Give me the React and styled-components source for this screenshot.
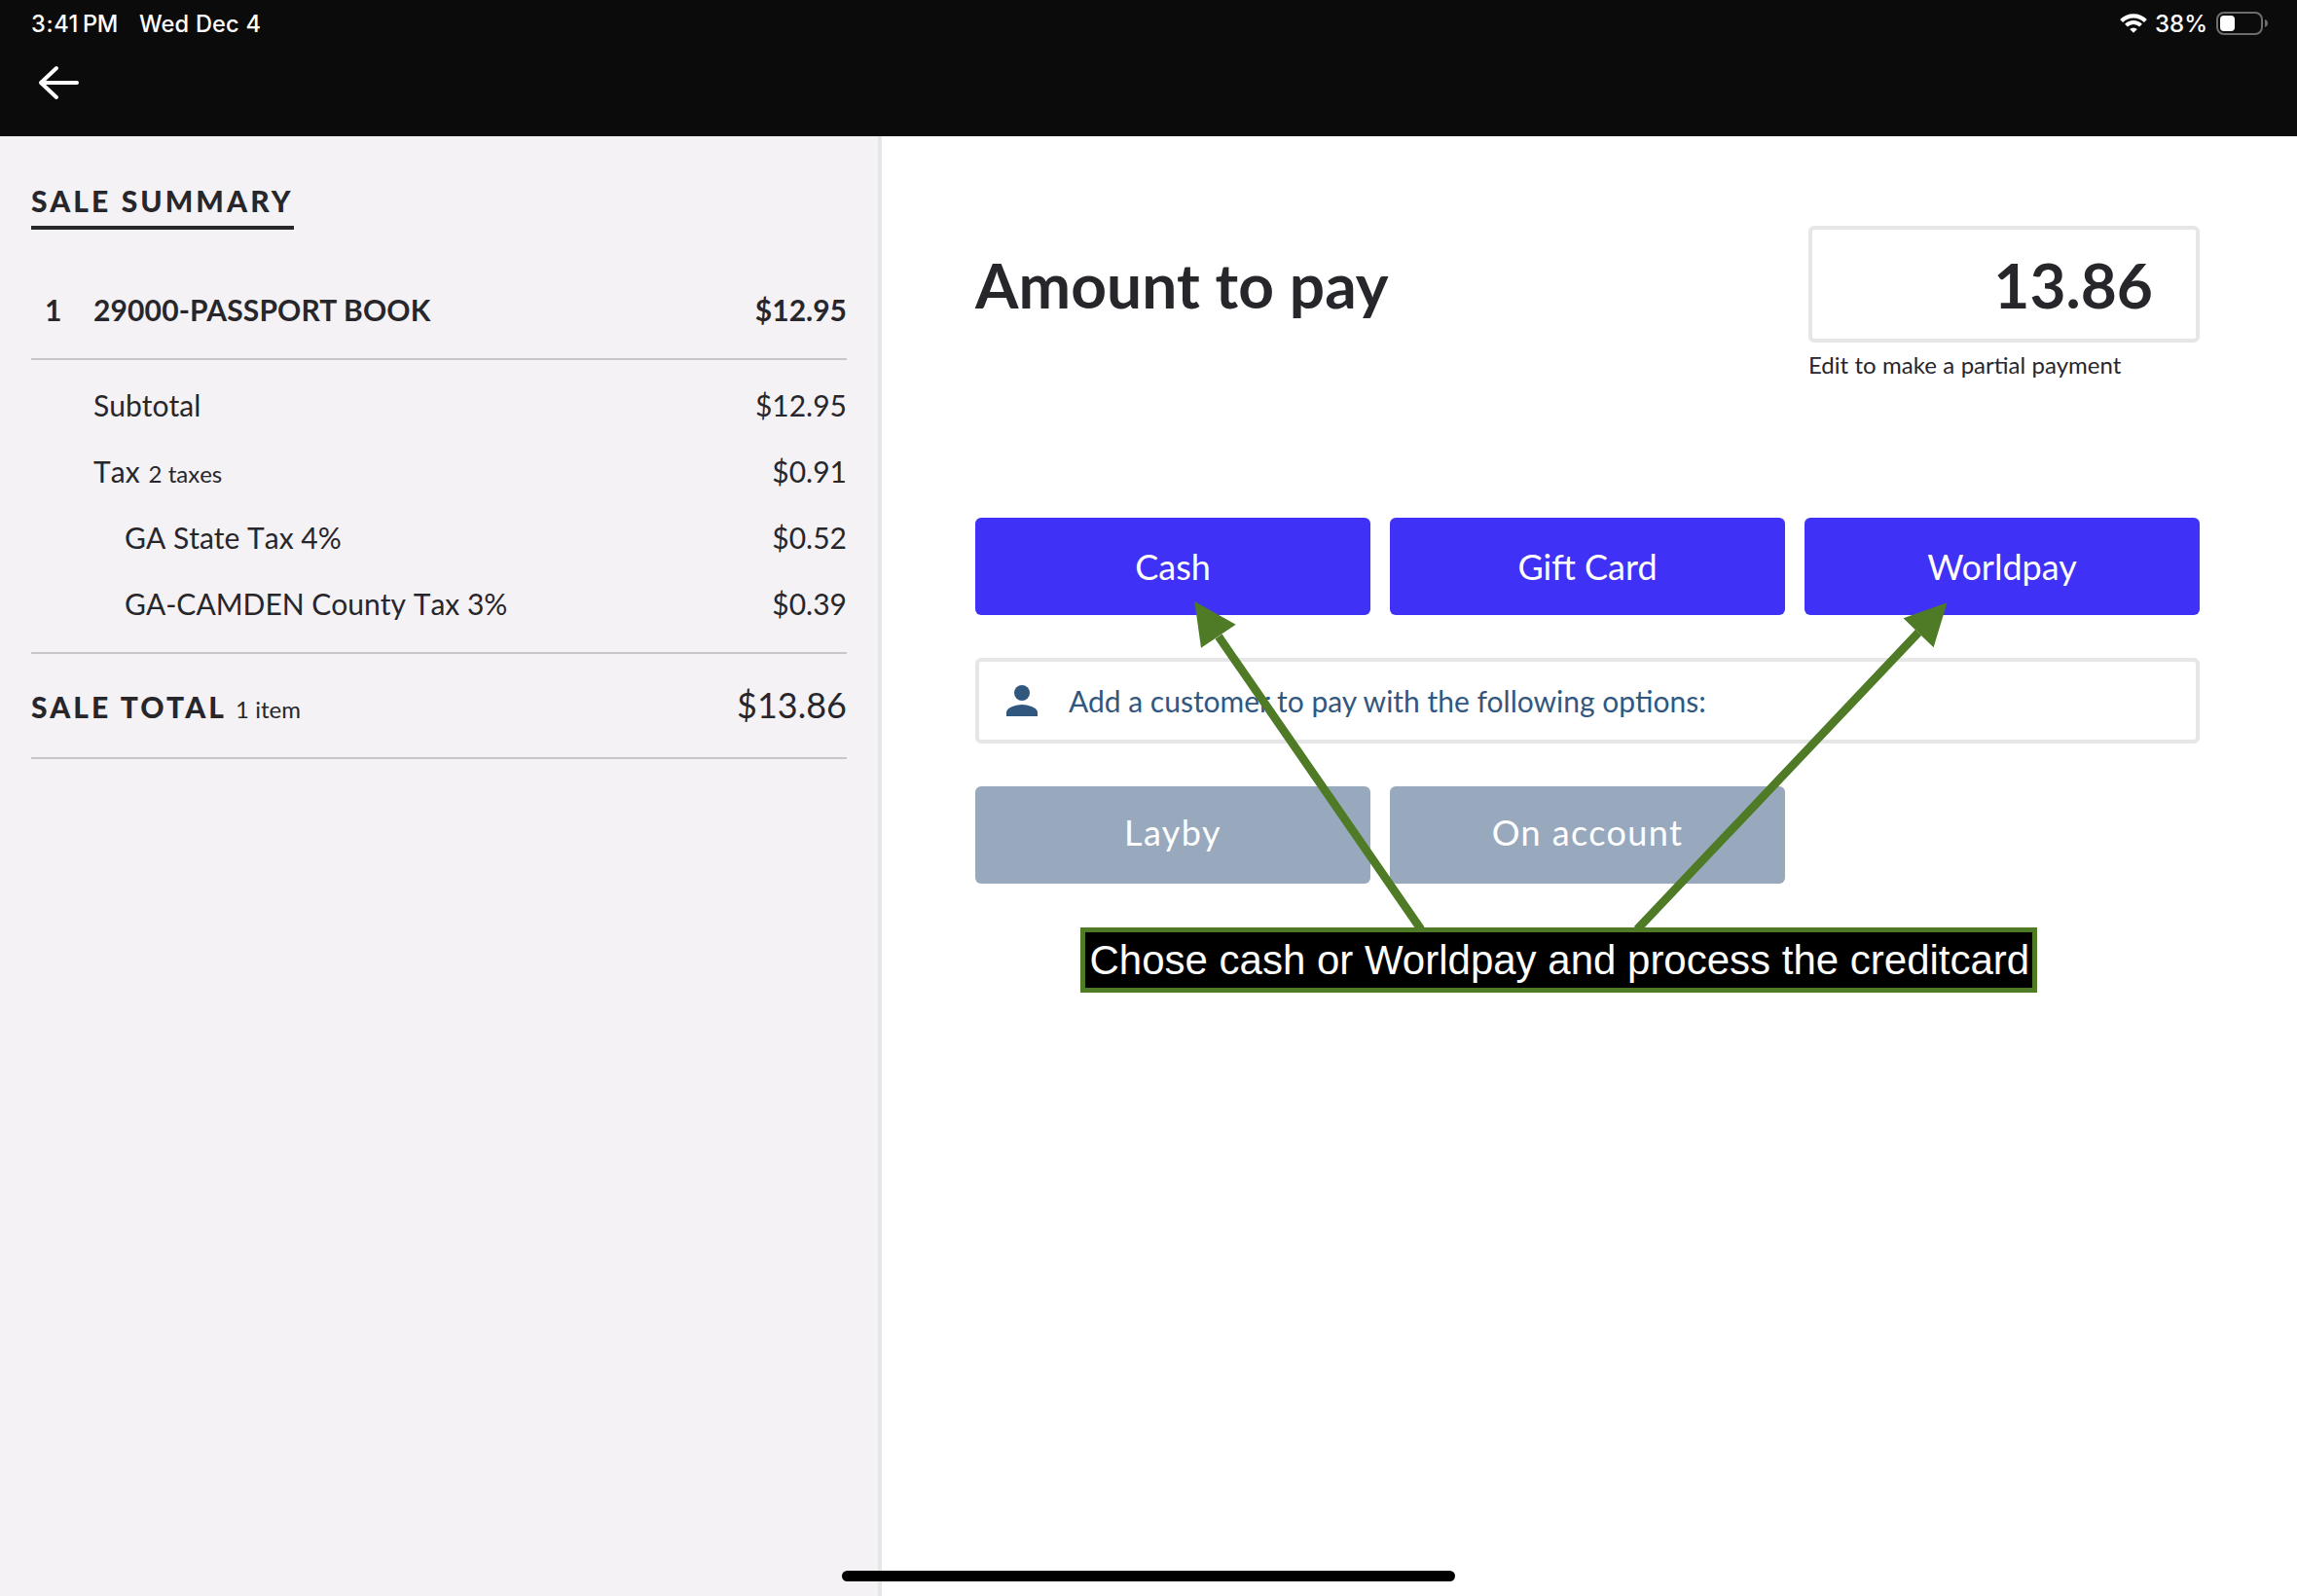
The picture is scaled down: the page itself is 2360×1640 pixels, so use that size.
import styled, { createGlobalStyle } from 'styled-components'

const charges = [
  { label: 'Subtotal', amount: '$12.95' },
  { label: 'Tax', note: '2 taxes', amount: '$0.91' },
  { label: 'GA State Tax 4%', amount: '$0.52', nested: true },
  { label: 'GA-CAMDEN County Tax 3%', amount: '$0.39', nested: true },
]

const payments = ['Cash', 'Gift Card', 'Worldpay']
const customerPayments = ['Layby', 'On account']

const WifiIcon = () => (
  <svg width="28" height="20" viewBox="0 0 28 20" fill="none" stroke="#fff">
    <path d="M1.6 7.4A17.6 17.6 0 0 1 26.4 7.4" strokeWidth="4.2" />
    <path d="M6.5 12.1A10.6 10.6 0 0 1 21.5 12.1" strokeWidth="4" />
    <path d="M14 19.8L10.2 16A5.4 5.4 0 0 1 17.8 16Z" fill="#fff" stroke="none" />
  </svg>
)

const BatteryIcon = () => (
  <svg width="54" height="24" viewBox="0 0 54 24">
    <rect x="1" y="1" width="46" height="22" rx="7" fill="none" stroke="#6d6d6d" strokeWidth="2" />
    <rect x="4" y="4" width="15" height="16" rx="4" fill="#fff" />
    <path d="M50 8C52 8.6 53 10.2 53 12S52 15.4 50 16Z" fill="#6d6d6d" />
  </svg>
)

const BackIcon = () => (
  <svg
    width="48"
    height="48"
    viewBox="0 0 48 48"
    fill="none"
    stroke="#fff"
    strokeWidth="4"
    strokeLinecap="round"
    strokeLinejoin="round"
  >
    <path d="M43 24H6M22 9L6 24L22 39" />
  </svg>
)

const PersonIcon = () => (
  <svg width="48" height="48" viewBox="0 0 24 24" fill="#32577f">
    <circle cx="12" cy="8" r="4" />
    <path d="M4 20v-2c0-2.66 5.33-4 8-4s8 1.34 8 4v2z" />
  </svg>
)

const App = () => {
  return (
    <Screen>
      <GlobalStyle />
      <Header>
        <StatusBar>
          <Clock>
            <Time>3:41</Time>
            <Meridiem>PM</Meridiem>
            <Day>Wed Dec 4</Day>
          </Clock>
          <Indicators>
            <WifiIcon />
            <Battery>38%</Battery>
            <BatteryIcon />
          </Indicators>
        </StatusBar>
        <BackButton aria-label="Back">
          <BackIcon />
        </BackButton>
      </Header>

      <Body>
        <Summary>
          <SummaryTitle>SALE SUMMARY</SummaryTitle>
          <ItemRow>
            <Quantity>1</Quantity>
            <ItemName>29000-PASSPORT BOOK</ItemName>
            <span>$12.95</span>
          </ItemRow>
          <Charges>
            {charges.map(({ label, note, amount, nested }) => (
              <ChargeRow key={label} $nested={nested}>
                <ChargeLabel>
                  {label}
                  {note && <Note>{note}</Note>}
                </ChargeLabel>
                <span>{amount}</span>
              </ChargeRow>
            ))}
          </Charges>
          <TotalRow>
            <TotalLabel>
              SALE TOTAL<Note>1 item</Note>
            </TotalLabel>
            <Total>$13.86</Total>
          </TotalRow>
        </Summary>

        <Payment>
          <AmountRow>
            <AmountTitle>Amount to pay</AmountTitle>
            <div>
              <AmountField>13.86</AmountField>
              <Hint>Edit to make a partial payment</Hint>
            </div>
          </AmountRow>
          <ButtonGrid>
            {payments.map(name => (
              <PayButton key={name}>{name}</PayButton>
            ))}
          </ButtonGrid>
          <CustomerPrompt>
            <PersonIcon />
            Add a customer to pay with the following options:
          </CustomerPrompt>
          <ButtonGrid>
            {customerPayments.map(name => (
              <PayButton key={name} $muted>
                {name}
              </PayButton>
            ))}
          </ButtonGrid>
        </Payment>
      </Body>

      <Arrows viewBox="0 0 2360 1640">
        <path d="M1460 955L1252 654M1682 955L1971 650" stroke="#4f7b27" strokeWidth="8.6" />
        <path
          d="M1227.3 618L1269.7 641.7L1234 665.7ZM2000.5 619.3L1955.5 635.3L1986.6 665.3Z"
          fill="#4f7b27"
        />
      </Arrows>
      <Callout>Chose cash or Worldpay and process the creditcard</Callout>
      <HomeIndicator />
    </Screen>
  )
}

export default App

const GlobalStyle = createGlobalStyle`
  * {
    box-sizing: border-box;
  }
  body {
    margin: 0;
    background: #fff;
  }
  svg {
    display: block;
  }
`

const Screen = styled.div`
  position: relative;
  display: flex;
  flex-direction: column;
  width: 2360px;
  height: 1640px;
  overflow: hidden;
  background: #fff;
  color: #27262b;
  font-family: Lato, 'Liberation Sans', sans-serif;
  font-size: 30px;
  line-height: 36px;
`

const Header = styled.header`
  height: 140px;
  padding-top: 9px;
  background: #0b0b0b;
  color: #fff;
`

const StatusBar = styled.div`
  display: flex;
  justify-content: space-between;
  align-items: center;
  height: 30px;
  padding: 0 29px 0 32px;
  font-family: Inter, 'Liberation Sans', sans-serif;
  font-size: 23.6px;
  font-weight: 500;
  line-height: 29px;
`

const Clock = styled.div`
  display: flex;
`

const Time = styled.span`
  letter-spacing: 0.6px;
`

const Meridiem = styled.span`
  margin: 0 22px 0 4px;
  letter-spacing: -0.3px;
`

const Day = styled.span`
  word-spacing: 0.7px;
`

const Indicators = styled.div`
  display: flex;
  align-items: center;
`

const Battery = styled.span`
  margin: 0 9px 0 8px;
  font-size: 24px;
`

const BackButton = styled.button`
  display: block;
  margin: 22px 0 0 36px;
  padding: 0;
  border: none;
  background: none;
`

const Body = styled.div`
  display: flex;
  flex: 1;
`

const Summary = styled.aside`
  width: 906px;
  padding: 48px 32px 0;
  border-right: 4px solid #e6e6e8;
  background: #f4f2f5;
`

const SummaryTitle = styled.h2`
  width: fit-content;
  margin: 0;
  padding-bottom: 8px;
  border-bottom: 4px solid #27262b;
  font-size: 30px;
  font-weight: 900;
  letter-spacing: 3.1px;
`

const ItemRow = styled.div`
  display: flex;
  padding: 64px 0 32px;
  border-bottom: 2px solid #c8c6ca;
  font-weight: 700;
`

const Quantity = styled.span`
  width: 64px;
  padding-left: 14px;
`

const ItemName = styled.span`
  flex: 1;
  letter-spacing: 0.14px;
`

const Charges = styled.div`
  padding: 12px 0 16px;
  border-bottom: 2px solid #c8c6ca;
`

const ChargeRow = styled.div`
  display: flex;
  justify-content: space-between;
  align-items: center;
  height: 68px;
  padding-left: ${props => (props.$nested ? '96px' : '64px')};
`

const ChargeLabel = styled.span`
  font-kerning: none;
`

const Note = styled.small`
  margin-left: 9px;
  font-size: 24px;
  font-weight: 400;
  line-height: 1;
  letter-spacing: 0;
`

const TotalRow = styled.div`
  display: flex;
  justify-content: space-between;
  align-items: baseline;
  padding: 30px 0 32px;
  border-bottom: 2px solid #c8c6ca;
`

const TotalLabel = styled.span`
  font-weight: 900;
  letter-spacing: 3.1px;
`

const Total = styled.span`
  font-size: 36px;
  line-height: 44px;
`

const Payment = styled.main`
  display: flex;
  flex: 1;
  flex-direction: column;
  padding: 92px 100px 0 96px;
`

const AmountRow = styled.div`
  display: flex;
  justify-content: space-between;
  align-items: flex-start;
  margin-bottom: 143px;
`

const AmountTitle = styled.h1`
  margin: 0;
  padding-top: 22px;
  font-size: 64px;
  font-weight: 700;
  line-height: 77px;
  letter-spacing: 0.1px;
`

const AmountField = styled.div`
  width: 402px;
  height: 120px;
  padding: 18px 44px 0 0;
  border: 4px solid #e6e6e8;
  border-radius: 6px;
  font-size: 64px;
  font-weight: 700;
  line-height: 77px;
  text-align: right;
`

const Hint = styled.p`
  margin: 8px 0 0;
  font-size: 24px;
  line-height: 29px;
  word-spacing: 0.25px;
`

const ButtonGrid = styled.div`
  display: grid;
  grid-template-columns: repeat(3, 406px);
  gap: 20px;
`

const PayButton = styled.button`
  height: 100px;
  padding: ${props => (props.$muted ? '0 0 6px' : '0')};
  border: none;
  border-radius: 6px;
  background: ${props => (props.$muted ? '#98a9be' : '#3f31f5')};
  color: #fff;
  font-family: inherit;
  font-size: 36px;
  line-height: 44px;
  letter-spacing: ${props => (props.$muted ? '1.4px' : 'normal')};
`

const CustomerPrompt = styled.div`
  display: flex;
  align-items: center;
  gap: 24px;
  height: 88px;
  margin: 44px 0;
  padding-left: 20px;
  border: 4px solid #e6e6e6;
  border-radius: 6px;
  color: #32577f;
`

// drawn over the whole screen, in screen pixels
const Arrows = styled.svg`
  position: absolute;
  inset: 0;
  width: 100%;
  height: 100%;
  pointer-events: none;
`

const Callout = styled.div`
  position: absolute;
  top: 953px;
  left: 1110px;
  width: 983px;
  height: 67px;
  padding: 5px 0 0 4.5px;
  border: 5px solid #4f7b27;
  background: #000;
  color: #fff;
  font-family: 'Liberation Sans', Arial, sans-serif;
  font-size: 42px;
  line-height: 47px;
  white-space: nowrap;
`

const HomeIndicator = styled.div`
  position: absolute;
  bottom: 15px;
  left: 865px;
  width: 630px;
  height: 11px;
  border-radius: 6px;
  background: #000;
`
